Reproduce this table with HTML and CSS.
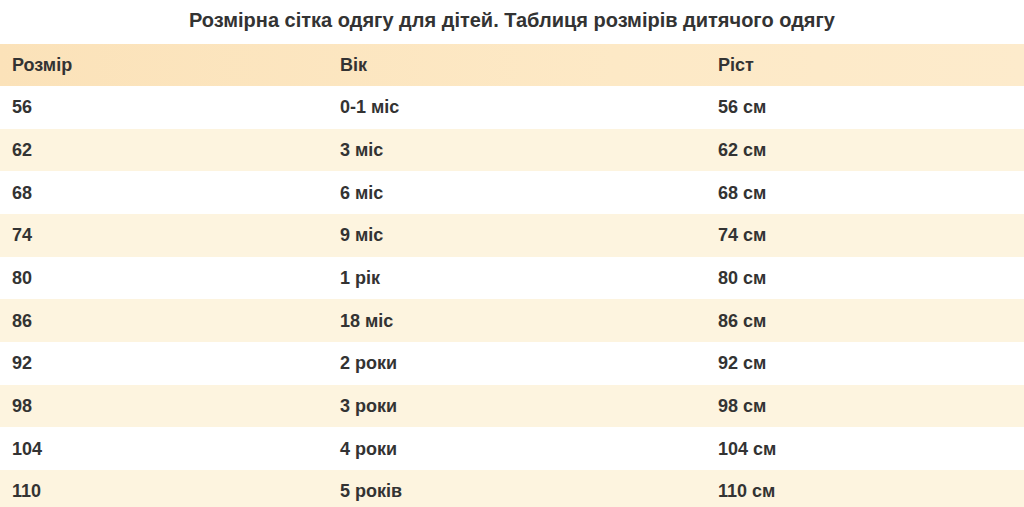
FILE: index.html
```html
<!DOCTYPE html>
<html lang="uk">
<head>
<meta charset="utf-8">
<title>Розмірна сітка</title>
<link rel="stylesheet" href="styles.css">
</head>
<body>
<h2 class="title">Розмірна сітка одягу для дітей. Таблиця розмірів дитячого одягу</h2>
<table class="sizes">
  <colgroup><col class="c1"><col class="c2"><col class="c3"></colgroup>
  <thead>
    <tr><th>Розмір</th><th>Вік</th><th>Ріст</th></tr>
  </thead>
  <tbody>
    <tr><td>56</td><td>0-1 міс</td><td>56 см</td></tr>
    <tr><td>62</td><td>3 міс</td><td>62 см</td></tr>
    <tr><td>68</td><td>6 міс</td><td>68 см</td></tr>
    <tr><td>74</td><td>9 міс</td><td>74 см</td></tr>
    <tr><td>80</td><td>1 рік</td><td>80 см</td></tr>
    <tr><td>86</td><td>18 міс</td><td>86 см</td></tr>
    <tr><td>92</td><td>2 роки</td><td>92 см</td></tr>
    <tr><td>98</td><td>3 роки</td><td>98 см</td></tr>
    <tr><td>104</td><td>4 роки</td><td>104 см</td></tr>
    <tr><td>110</td><td>5 років</td><td>110 см</td></tr>
  </tbody>
</table>
</body>
</html>
```

FILE: styles.css
```css
html, body {
  margin: 0;
  padding: 0;
  background: #ffffff;
  font-family: "Liberation Sans", Arial, sans-serif;
  color: #333333;
}
.title {
  margin: 0;
  padding-top: 8px;
  height: 44px;
  box-sizing: border-box;
  text-align: center;
  font-size: 20px;
  line-height: 24px;
  font-weight: bold;
  color: #333333;
}
.sizes {
  width: 100%;
  border-collapse: collapse;
  table-layout: fixed;
  font-size: 18px;
  font-weight: bold;
}
.c1 { width: 328px; }
.c2 { width: 378px; }
.c3 { width: auto; }
.sizes th, .sizes td {
  text-align: left;
  padding: 0 12px;
  height: 42.67px;
  line-height: 22px;
  vertical-align: middle;
  color: #333333;
}
.sizes thead tr {
  background: linear-gradient(to right, #fbe2b9, #fde9c6 60%, #fdebcc);
}
.sizes thead th {
  height: 42px;
}
.sizes tbody tr:nth-child(odd) { background: #ffffff; }
.sizes tbody tr:nth-child(even) { background: #fdf4df; }
```
